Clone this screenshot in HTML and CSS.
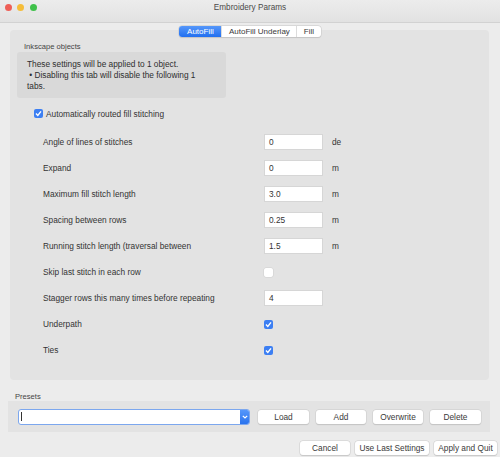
FILE: index.html
```html
<!DOCTYPE html>
<html lang="en">
<head>
    <meta charset="UTF-8">
    <title>Embroidery Params</title>
    <link rel="stylesheet" href="styles.css">
</head>
<body>
<div class="window">
    <div class="titlebar">
        <div class="lights">
            <span class="light red"></span>
            <span class="light yellow"></span>
            <span class="light green"></span>
        </div>
        <div class="title">Embroidery Params</div>
        <div></div>
    </div>

    <div class="tabs">
        <span class="tab active">AutoFill</span>
        <span class="tab">AutoFill Underlay</span>
        <span class="tab">Fill</span>
    </div>

    <div class="panel">
        <div class="legend">Inkscape objects</div>
        <div class="info">
            These settings will be applied to 1 object.<br>
            &nbsp;• Disabling this tab will disable the following 1<br>
            tabs.
        </div>

        <label class="toggle">
            <span class="check on"></span>
            Automatically routed fill stitching
        </label>

        <div class="params">
            <div class="row"><span class="name">Angle of lines of stitches</span><span class="field">0</span><span class="unit">de</span></div>
            <div class="row"><span class="name">Expand</span><span class="field">0</span><span class="unit">m</span></div>
            <div class="row"><span class="name">Maximum fill stitch length</span><span class="field">3.0</span><span class="unit">m</span></div>
            <div class="row"><span class="name">Spacing between rows</span><span class="field">0.25</span><span class="unit">m</span></div>
            <div class="row"><span class="name">Running stitch length (traversal between</span><span class="field">1.5</span><span class="unit">m</span></div>
            <div class="row"><span class="name">Skip last stitch in each row</span><span class="check"></span></div>
            <div class="row"><span class="name">Stagger rows this many times before repeating</span><span class="field">4</span></div>
            <div class="row"><span class="name">Underpath</span><span class="check on"></span></div>
            <div class="row"><span class="name">Ties</span><span class="check on"></span></div>
        </div>
    </div>

    <div class="presets-label">Presets</div>
    <div class="presets">
        <div class="combo">
            <span class="caret"></span>
            <span class="combo-btn">
                <svg width="6" height="4" viewBox="0 0 6 4"><path d="M0.8 0.8 L3 3 L5.2 0.8" fill="none" stroke="#fff" stroke-width="1.2"/></svg>
            </span>
        </div>
        <span class="btn w51">Load</span>
        <span class="btn w50">Add</span>
        <span class="btn w50">Overwrite</span>
        <span class="btn w51">Delete</span>
    </div>

    <div class="actions">
        <span class="btn w50">Cancel</span>
        <span class="btn w74">Use Last Settings</span>
        <span class="btn w63">Apply and Quit</span>
    </div>
</div>
</body>
</html>
```

FILE: styles.css
```css
/* base */
body {
    margin: 0;
    font-family: "Liberation Sans", Arial, sans-serif;
    font-size: 8.3px;
    color: #333;
}

.window {
    width: 500px;
    height: 457px;
    background: #ececec;
    display: flex;
    flex-direction: column;
}

/* title bar */
.titlebar {
    height: 22px;
    border-bottom: 1px solid #d2d2d2;
    background: linear-gradient(#ececec, #e2e2e2);
    display: grid;
    grid-template-columns: 1fr auto 1fr;
    align-items: center;
}
.lights {
    display: flex;
    gap: 5.5px;
    padding-left: 4.5px;
    margin-top: -8px;
}
.light {
    width: 7px;
    height: 7px;
    border-radius: 50%;
}
.red {background: #ee5f57}
.yellow {background: #f5bd3a}
.green {background: #3fc14a}
.title {
    font-size: 8.2px;
    color: #4a4a4a;
    margin-top: -7px;
}

/* tabs */
.tabs {
    align-self: center;
    display: flex;
    margin: 3px 0 -7px 0;
    height: 11px;
    background: #fff;
    border-radius: 3px;
    box-shadow: 0 0 0 0.5px #c8c8c8, 0 0.5px 1px rgba(0,0,0,.15);
    position: relative;
    z-index: 1;
    font-size: 8px;
}
.tab {
    display: flex;
    align-items: center;
    padding: 0 6.5px;
    color: #3a3a3a;
    border-left: 1px solid #dcdcdc;
}
.tab:first-child {border-left: 0}
.tab.active {
    width: 29px;
    justify-content: center;
    color: #fff;
    background: linear-gradient(#5597fa, #216ff0);
    border-radius: 3px 0 0 3px;
}

/* main panel */
.panel {
    margin: 0 11px 0 10px;
    height: 350px;
    background: #e3e3e3;
    border-radius: 4px;
    box-sizing: border-box;
    padding-top: 12px;
}
.legend {
    margin-left: 14px;
    line-height: 10px;
    font-size: 7.6px;
    color: #444;
}
.info {
    margin: 0 0 0 7px;
    width: 209px;
    height: 46px;
    box-sizing: border-box;
    background: #d9d9d9;
    border-radius: 3px;
    padding: 6.5px 0 0 10px;
    line-height: 11px;
    color: #2e2e2e;
}
.toggle {
    display: flex;
    align-items: center;
    gap: 3px;
    margin: 11px 0 0 24px;
    height: 9px;
}

.check {
    display: inline-block;
    width: 9px;
    height: 9px;
    box-sizing: border-box;
    background: #fff;
    border-radius: 2px;
    box-shadow: 0 0 0 0.5px #cfcfcf;
}
.check.on {
    background: #3c7ff3 url("data:image/svg+xml,%3Csvg xmlns='http://www.w3.org/2000/svg' viewBox='0 0 9 9'%3E%3Cpath d='M2 4.6 L3.8 6.4 L7 2.4' fill='none' stroke='white' stroke-width='1.4'/%3E%3C/svg%3E") center/9px 9px no-repeat;
    box-shadow: none;
}

/* parameter rows */
.params {
    margin-top: 11px;
}
.row {
    display: flex;
    align-items: center;
    height: 26px;
    padding-left: 33px;
}
.name {
    width: 221px;
    white-space: nowrap;
}
.field {
    width: 59px;
    height: 16px;
    box-sizing: border-box;
    background: #fff;
    border: 1px solid #d6d6d6;
    padding: 0 4px;
    display: flex;
    align-items: center;
    color: #333;
}
.unit {
    margin-left: 9px;
}

/* presets */
.presets-label {
    margin: 12px 0 0 15px;
    line-height: 10px;
    font-size: 7.6px;
    color: #444;
}
.presets {
    margin: -1px 10px 0 8px;
    height: 31px;
    background: #e3e3e3;
    display: flex;
    align-items: center;
    padding-left: 10px;
    gap: 7px;
}
.combo {
    width: 232px;
    height: 16px;
    box-sizing: border-box;
    background: #fff;
    border: 1.5px solid #7ca7ee;
    border-radius: 3px;
    display: flex;
    align-items: center;
    margin-right: 1px;
}
.caret {
    width: 1px;
    height: 9px;
    background: #333;
    margin-left: 2px;
}
.combo-btn {
    margin-left: auto;
    width: 9px;
    height: 100%;
    background: linear-gradient(#5597fa, #2a73ee);
    display: flex;
    align-items: center;
    justify-content: center;
    border-radius: 0 2px 2px 0;
}

.btn {
    height: 14px;
    background: #fff;
    border-radius: 3px;
    box-shadow: 0 0 0 0.5px #cdcdcd, 0 0.5px 1px rgba(0,0,0,.18);
    display: flex;
    align-items: center;
    justify-content: center;
    color: #3a3a3a;
}
.w50 {width: 50px}
.w51 {width: 51px}
.w63 {width: 63px}
.w74 {width: 74px}

.actions {
    display: flex;
    justify-content: flex-end;
    gap: 5px;
    margin: 9px 3px 0 0;
}
```
